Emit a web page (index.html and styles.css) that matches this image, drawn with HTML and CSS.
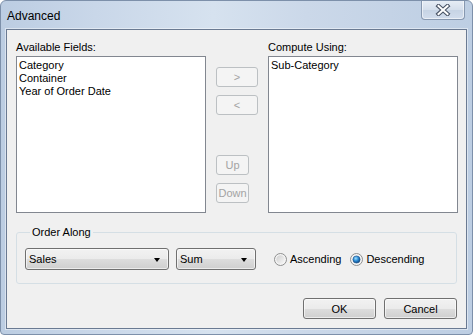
FILE: index.html
```html
<!DOCTYPE html>
<html>
<head>
<meta charset="utf-8">
<link rel="stylesheet" href="styles.css">
</head>
<body>
<div class="window">
  <div class="titlebar">
    <span class="title">Advanced</span>
    <button class="close" aria-label="Close">
      <svg width="16" height="12" viewBox="0 0 16 12">
        <path d="M3.5 2 L12.5 10 M12.5 2 L3.5 10" stroke="#4a5466" stroke-width="4.2" stroke-linecap="square" fill="none"/>
        <path d="M3.5 2 L12.5 10 M12.5 2 L3.5 10" stroke="#ffffff" stroke-width="2" stroke-linecap="square" fill="none"/>
      </svg>
    </button>
  </div>
  <div class="client">
    <div class="fields">
      <div class="col">
        <div class="label">Available Fields:</div>
        <ul class="listbox">
          <li>Category</li>
          <li>Container</li>
          <li>Year of Order Date</li>
        </ul>
      </div>
      <div class="mid">
        <button class="btn dis wide">&gt;</button>
        <button class="btn dis wide">&lt;</button>
        <div class="spacer"></div>
        <button class="btn dis narrow">Up</button>
        <button class="btn dis narrow">Down</button>
      </div>
      <div class="col">
        <div class="label">Compute Using:</div>
        <ul class="listbox">
          <li>Sub-Category</li>
        </ul>
      </div>
    </div>
    <fieldset class="group">
      <legend>Order Along</legend>
      <div class="group-row">
        <div class="combo combo-sales"><span>Sales</span><i class="arrow"></i></div>
        <div class="combo combo-sum"><span>Sum</span><i class="arrow"></i></div>
        <label class="radio">
          <svg width="13" height="13" viewBox="0 0 13 13">
            <defs>
              <linearGradient id="rg1" x1="0" y1="0" x2="1" y2="1">
                <stop offset="0" stop-color="#cfcfcf"/>
                <stop offset="1" stop-color="#f8f8f8"/>
              </linearGradient>
            </defs>
            <circle cx="6.5" cy="6.5" r="6" fill="#f4f4f4" stroke="#8e8f8f"/>
            <circle cx="6.5" cy="6.5" r="4.2" fill="url(#rg1)"/>
          </svg>
          <span>Ascending</span>
        </label>
        <label class="radio">
          <svg width="13" height="13" viewBox="0 0 13 13">
            <defs>
              <radialGradient id="rg2" cx="0.4" cy="0.35" r="0.7">
                <stop offset="0" stop-color="#9fe0ff"/>
                <stop offset="0.5" stop-color="#2a8ad4"/>
                <stop offset="1" stop-color="#0c3f77"/>
              </radialGradient>
            </defs>
            <circle cx="6.5" cy="6.5" r="6" fill="#f4f4f4" stroke="#8e8f8f"/>
            <circle cx="6.5" cy="6.5" r="3.6" fill="url(#rg2)" stroke="#1a4f86" stroke-width="0.6"/>
          </svg>
          <span>Descending</span>
        </label>
      </div>
    </fieldset>
    <div class="actions">
      <button class="btn action">OK</button>
      <button class="btn action">Cancel</button>
    </div>
  </div>
</div>
</body>
</html>
```

FILE: styles.css
```css
* { box-sizing: border-box; }
html, body {
  margin: 0;
  padding: 0;
  background: #ffffff;
}
body {
  font-family: "Liberation Sans", Arial, sans-serif;
  font-size: 11px;
  color: #000;
}
.window {
  width: 473px;
  height: 335px;
  border: 1px solid #7d90aa;
  border-radius: 6px 6px 4px 4px;
  background: linear-gradient(to right, #bccde2 0%, #c9d7e9 20%, #d6e2ef 45%, #cbd8e9 65%, #bdcee3 100%);
  display: flex;
  flex-direction: column;
  overflow: hidden;
}
.titlebar {
  height: 28px;
  display: flex;
  align-items: flex-start;
  justify-content: space-between;
  padding-left: 6px;
}
.title {
  font-size: 12px;
  line-height: 14px;
  margin-top: 8px;
  color: #000;
}
.close {
  width: 44px;
  height: 20px;
  margin: -1px 7px 0 0;
  padding: 0;
  border: 1px solid #8798b0;
  border-top: none;
  border-radius: 0 0 4px 4px;
  background: linear-gradient(#e8eef6, #d5dfec 50%, #c6d3e4 51%, #d2dded);
  box-shadow: inset 0 0 0 1px rgba(255,255,255,0.55);
  display: flex;
  align-items: center;
  justify-content: center;
}
.close svg { display: block; margin-top: 1px; }
.client {
  flex: 1;
  margin: 0 5px 5px 5px;
  background: #f0f0f0;
  border: 1px solid #6a7a92;
  box-shadow: 0 0 0 1px rgba(255,255,255,0.45);
  padding: 10px 9px 0 9px;
  display: flex;
  flex-direction: column;
}
.fields {
  display: grid;
  grid-template-columns: 190px 62px 190px;
}
.label {
  line-height: 15px;
  height: 15px;
  margin-bottom: 1px;
}
.listbox {
  list-style: none;
  margin: 0;
  padding: 2px 2px;
  height: 157px;
  background: #fff;
  border: 1px solid #828790;
}
.listbox li {
  line-height: 13px;
  white-space: nowrap;
}
.mid {
  display: flex;
  flex-direction: column;
  align-items: flex-start;
  padding: 27px 0 0 10px;
  gap: 8px;
}
.spacer { height: 24px; }
.btn {
  font-family: inherit;
  font-size: 11px;
  padding: 0;
  height: 20px;
  border-radius: 3px;
  line-height: 16px;
}
.dis {
  border: 1px solid #bcc0c3;
  background: #f4f4f4;
  color: #a3a3a3;
}
.wide { width: 42px; }
.narrow { width: 33px; }
.group {
  margin: 12px 0 0 0;
  min-width: 0;
  border: 1px solid #d5dfe5;
  border-radius: 3px;
  padding: 8px 8px 13px 8px;
  width: 441px;
}
.group legend {
  padding: 0 2px;
  margin-left: 5px;
  line-height: 15px;
}
.group-row {
  display: flex;
  align-items: center;
}
.combo {
  height: 22px;
  border: 1px solid #707070;
  border-radius: 3px;
  background: linear-gradient(#f2f2f2 0%, #ebebeb 50%, #dddddd 51%, #cfcfcf 100%);
  box-shadow: inset 0 0 0 1px rgba(255,255,255,0.6);
  display: flex;
  align-items: center;
  justify-content: space-between;
  padding: 0 8px 0 3px;
}
.combo span { line-height: 14px; }
.combo-sales { width: 144px; }
.combo-sum { width: 80px; margin-left: 7px; }
.arrow {
  width: 0;
  height: 0;
  border-left: 3.5px solid transparent;
  border-right: 3.5px solid transparent;
  border-top: 4px solid #000;
  margin-top: 1px;
}
.radio {
  display: flex;
  align-items: center;
  gap: 3px;
  margin-left: 18px;
}
.radio svg { display: block; }
.radio + .radio { margin-left: 9px; }
.actions {
  display: flex;
  justify-content: flex-end;
  gap: 8px;
  margin-top: 14px;
  padding-right: 0;
}
.action {
  width: 73px;
  height: 21px;
  border: 1px solid #707070;
  background: linear-gradient(#f2f2f2 0%, #ebebeb 50%, #dddddd 51%, #cfcfcf 100%);
  box-shadow: inset 0 0 0 1px rgba(255,255,255,0.6);
  color: #000;
}
```
